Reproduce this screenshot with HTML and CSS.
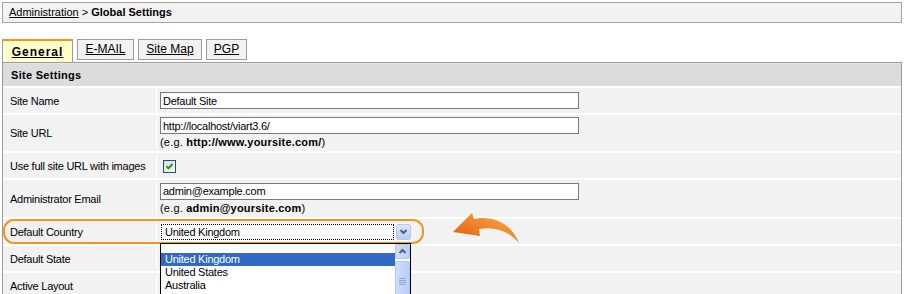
FILE: index.html
```html
<!DOCTYPE html>
<html lang="en">
<head>
    <meta charset="UTF-8">
    <title>Global Settings</title>
    <link rel="stylesheet" href="styles.css">
</head>
<body>
    <div class="crumb"><a href="#">Administration</a> &gt; <b>Global Settings</b></div>

    <div class="tabs">
        <a href="#" class="tab tab-active tab-general">General</a>
        <a href="#" class="tab tab-mail">E-MAIL</a>
        <a href="#" class="tab tab-map">Site Map</a>
        <a href="#" class="tab tab-pgp">PGP</a>
    </div>

    <div class="panel">
        <table class="settings">
            <tr><th colspan="2">Site Settings</th></tr>
            <tr class="row">
                <td class="label">Site Name</td>
                <td class="value"><input class="field" type="text" value="Default Site"></td>
            </tr>
            <tr class="row row-tall">
                <td class="label">Site URL</td>
                <td class="value">
                    <input class="field" type="text" value="http://localhost/viart3.6/">
                    <div class="hint">(e.g. <b>http://www.yoursite.com/</b>)</div>
                </td>
            </tr>
            <tr class="row">
                <td class="label">Use full site URL with images</td>
                <td class="value">
                    <span class="check">
                        <svg width="11" height="11" viewBox="0 0 11 11"><path d="M2.5 5.2 L4.5 7.3 L8.6 3" fill="none" stroke="#21a121" stroke-width="2"/></svg>
                    </span>
                </td>
            </tr>
            <tr class="row row-tall2">
                <td class="label">Administrator Email</td>
                <td class="value">
                    <input class="field" type="text" value="admin@example.com">
                    <div class="hint">(e.g. <b>admin@yoursite.com</b>)</div>
                </td>
            </tr>
            <tr class="row">
                <td class="label">Default Country</td>
                <td class="value">
                    <div class="select">
                        <span class="select-text">United Kingdom</span>
                        <span class="select-btn">
                            <svg width="13" height="13" viewBox="0 0 13 13"><path d="M3.5 5 L6.5 8 L9.5 5" fill="none" stroke="#4d6185" stroke-width="2"/></svg>
                        </span>
                        <div class="droplist">
                            <ul class="options">
                                <li class="opt-blank">&nbsp;</li>
                                <li class="selected">United Kingdom</li>
                                <li>United States</li>
                                <li>Australia</li>
                            </ul>
                            <div class="scroll">
                                <span class="scroll-up">
                                    <svg width="13" height="13" viewBox="0 0 13 13"><path d="M3.5 8 L6.5 5 L9.5 8" fill="none" stroke="#4d6185" stroke-width="2"/></svg>
                                </span>
                                <span class="scroll-thumb">
                                    <svg width="7" height="8" viewBox="0 0 7 8"><path d="M0 1.5H7M0 3.5H7M0 5.5H7M0 7.5H7" stroke="#8da5e0" stroke-width="1"/></svg>
                                </span>
                            </div>
                        </div>
                    </div>
                </td>
            </tr>
            <tr class="row">
                <td class="label">Default State</td>
                <td class="value"></td>
            </tr>
            <tr class="row">
                <td class="label">Active Layout</td>
                <td class="value"></td>
            </tr>
        </table>
    </div>

    <!-- annotation -->
    <div class="mark"></div>
    <svg class="pointer" width="68" height="32" viewBox="0 0 68 32">
        <defs>
            <linearGradient id="og" x1="1" y1="0" x2="0" y2="1">
                <stop offset="0" stop-color="#fbb24a"/>
                <stop offset="1" stop-color="#e2560c"/>
            </linearGradient>
        </defs>
        <path d="M0 19 L19 0 L21 6 C38 2 58 9 66 30 C56 18 42 13 26 16 L27 23 Z" fill="url(#og)"/>
    </svg>
</body>
</html>
```

FILE: styles.css
```css
html,
body {
    margin: 0;
    overflow: hidden;
    background: #fff;
}
body {
    position: relative;
    font-family: "Liberation Sans", Arial, sans-serif;
    font-size: 11px;
    color: #000;
}
.crumb {
    margin: 2px 2px 0;
    height: 19px;
    line-height: 19px;
    border: 1px solid #a4a4a4;
    background: #f2f2f2;
    padding-left: 6px;
}
.crumb a {
    color: #000;
}
.tabs {
    display: flex;
    align-items: flex-start;
    height: 23px;
    margin: 16px 0 0 2px;
}
.tab {
    box-sizing: border-box;
    height: 21px;
    line-height: 19px;
    margin-left: 4px;
    border: 1px solid #9c9c9c;
    background: #f2f2f2;
    color: #000;
    font-size: 12px;
    text-align: center;
}
.tab-active {
    margin-left: 0;
    height: 23px;
    line-height: 23px;
    border-top: 2px solid #f7941d;
    border-bottom: none;
    background: #ffffcc;
    font-weight: bold;
    letter-spacing: 1px;
}
.tab-general { width: 71px; }
.tab-mail { width: 57px; }
.tab-map { width: 64px; }
.tab-pgp { width: 41px; }

.panel {
    margin: 0 2px;
    border: 1px solid #9c9c9c;
    border-bottom: none;
}
.settings {
    width: 100%;
    border-collapse: separate;
    border-spacing: 0;
}
.settings th {
    height: 23px;
    padding: 0 0 0 8px;
    background: #dcdcdc;
    border-top: 1px solid #e4e4e4;
    box-sizing: border-box;
    text-align: left;
    font-weight: bold;
    letter-spacing: 0.3px;
}
.settings td {
    box-sizing: border-box;
    height: 27px;
    padding: 0;
    background: #f2f2f2;
    border-top: 2px solid #fff;
    vertical-align: middle;
}
.settings .row-tall td {
    height: 38px;
}
.settings .row-tall2 td {
    height: 39px;
}
.settings td.label {
    width: 154px;
    padding-left: 7px;
    border-right: 1px solid #fff;
    letter-spacing: -0.25px;
}
.settings td.value {
    padding-left: 3px;
}
.field {
    display: block;
    box-sizing: border-box;
    width: 419px;
    height: 17px;
    margin: 0;
    padding: 0 2px;
    border: 1px solid #7a7a7a;
    background: #fff;
    font-family: inherit;
    font-size: 11px;
    letter-spacing: -0.25px;
    color: #000;
}
.hint {
    line-height: 14px;
    margin-top: 1px;
    letter-spacing: 0.2px;
}
.check {
    display: block;
    box-sizing: border-box;
    width: 13px;
    height: 13px;
    margin: 1px 0 0 3px;
    border: 1px solid #1c5180;
    background: linear-gradient(135deg, #dcdcd7, #fbfbfa);
}
.check svg {
    display: block;
}

/* select + open list */
.select {
    position: relative;
    display: flex;
    box-sizing: border-box;
    width: 251px;
    height: 18px;
    background: #fff;
    letter-spacing: -0.25px;
}
.select-text {
    flex: 1;
    margin: 1px 2px 1px 1px;
    padding-left: 3px;
    line-height: 14px;
    border: 1px dotted #000;
}
.select-btn {
    display: flex;
    align-items: center;
    justify-content: center;
    box-sizing: border-box;
    width: 15px;
    height: 16px;
    margin-top: 1px;
    border: 1px solid #b4c8f4;
    border-radius: 2px;
    background: linear-gradient(#dde6fd, #b8cbf5);
}
.droplist {
    position: absolute;
    top: 20px;
    left: 0;
    z-index: 3;
    display: flex;
    box-sizing: border-box;
    width: 251px;
    height: 62px;
    border: 1px solid #000;
    background: #fff;
}
.options {
    flex: 1;
    list-style: none;
    margin: 0;
    padding: 0;
}
.options li {
    height: 13px;
    line-height: 13px;
    padding-left: 4px;
}
.options .opt-blank {
    height: 9px;
}
.options .selected {
    background: #316ac5;
    color: #fff;
}
.scroll {
    display: flex;
    flex-direction: column;
    gap: 2px;
    width: 15px;
    background: #fbfbf8;
}
.scroll-up,
.scroll-thumb {
    display: flex;
    align-items: center;
    justify-content: center;
    box-sizing: border-box;
    width: 15px;
    border: 1px solid #b4c8f4;
    border-radius: 2px;
    background: linear-gradient(90deg, #cfdcfb, #bccdf6);
}
.scroll-up {
    height: 15px;
}
.scroll-thumb {
    height: 40px;
}

/* annotation overlay */
.mark {
    position: absolute;
    left: 3px;
    top: 219px;
    z-index: 2;
    width: 421px;
    height: 25px;
    box-sizing: border-box;
    border: 2px solid #f39422;
    border-radius: 11px;
}
.pointer {
    position: absolute;
    left: 453px;
    top: 213px;
    z-index: 2;
}
```
